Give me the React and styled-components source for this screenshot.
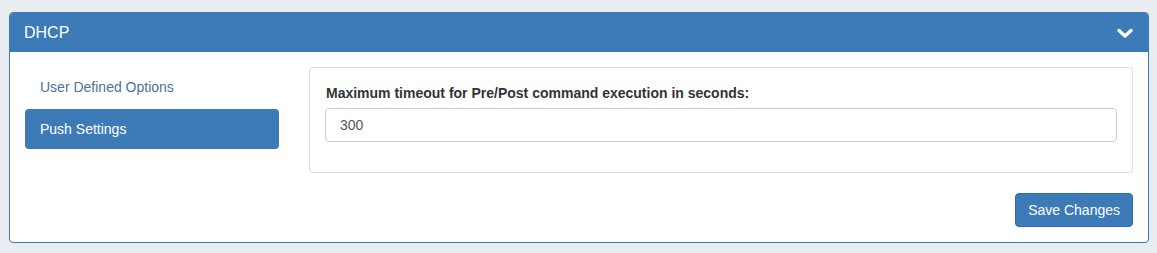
import React from "react";
import styled, { createGlobalStyle } from "styled-components";

const Global = createGlobalStyle`
  html, body { margin: 0; padding: 0; }
  body {
    background: #e9edf1;
    font-family: "Liberation Sans", Arial, sans-serif;
    font-size: 14px;
    color: #333;
  }
`;

const Page = styled.div`
  padding: 12px 8px 10px 9px;
`;

const Panel = styled.section`
  background: #fff;
  border: 1px solid #3d7ab8;
  border-radius: 4px;
  overflow: hidden;
`;

const Header = styled.header`
  height: 39px;
  background: #3d7ab8;
  color: #fff;
  display: flex;
  align-items: center;
  justify-content: space-between;
  padding: 0 15px 0 14px;
  font-size: 16px;
`;

const Body = styled.div`
  padding: 15px;
`;

const Columns = styled.div`
  display: grid;
  grid-template-columns: 254px 1fr;
  gap: 30px;
`;

const Nav = styled.nav`
  display: flex;
  flex-direction: column;
  gap: 2px;
`;

const NavItem = styled.a`
  display: flex;
  align-items: center;
  height: 40px;
  padding: 0 15px;
  border-radius: 4px;
  font-size: 14px;
  text-decoration: none;
  cursor: pointer;
  background: ${(p) => (p.$active ? "#3d7ab8" : "transparent")};
  color: ${(p) => (p.$active ? "#fff" : "#4a73a0")};
`;

const Card = styled.div`
  border: 1px solid #dddddd;
  border-radius: 4px;
  padding: 15px 15px 30px 15px;
`;

const Label = styled.label`
  display: block;
  font-weight: bold;
  font-size: 14px;
  line-height: 20px;
  margin: 0 0 5px 1px;
  color: #333;
`;

const Input = styled.input`
  box-sizing: border-box;
  width: 100%;
  height: 34px;
  border: 1px solid #cccccc;
  border-radius: 4px;
  padding: 0 14px;
  font-family: "Liberation Sans", Arial, sans-serif;
  font-size: 14px;
  color: #555;
  outline: none;
`;

const Footer = styled.div`
  display: flex;
  justify-content: flex-end;
  margin-top: 20px;
`;

const Button = styled.button`
  height: 34px;
  padding: 0 12px;
  background: #3d7ab8;
  color: #fff;
  border: 1px solid #2e6da4;
  border-radius: 4px;
  font-family: "Liberation Sans", Arial, sans-serif;
  font-size: 14px;
  cursor: pointer;
`;

const Chevron = () => (
  <svg width="16" height="12" viewBox="0 0 16 12" aria-hidden="true">
    <path d="M2 3.5 L8 9 L14 3.5" fill="none" stroke="#fff" strokeWidth="3.4" strokeLinecap="round" strokeLinejoin="round" />
  </svg>
);

export default function App() {
  return (
    <>
      <Global />
      <Page>
        <Panel>
          <Header>
            <span>DHCP</span>
            <Chevron />
          </Header>
          <Body>
            <Columns>
              <Nav>
                <NavItem>User Defined Options</NavItem>
                <NavItem $active>Push Settings</NavItem>
              </Nav>
              <div>
                <Card>
                  <Label>Maximum timeout for Pre/Post command execution in seconds:</Label>
                  <Input defaultValue="300" />
                </Card>
                <Footer>
                  <Button>Save Changes</Button>
                </Footer>
              </div>
            </Columns>
          </Body>
        </Panel>
      </Page>
    </>
  );
}
